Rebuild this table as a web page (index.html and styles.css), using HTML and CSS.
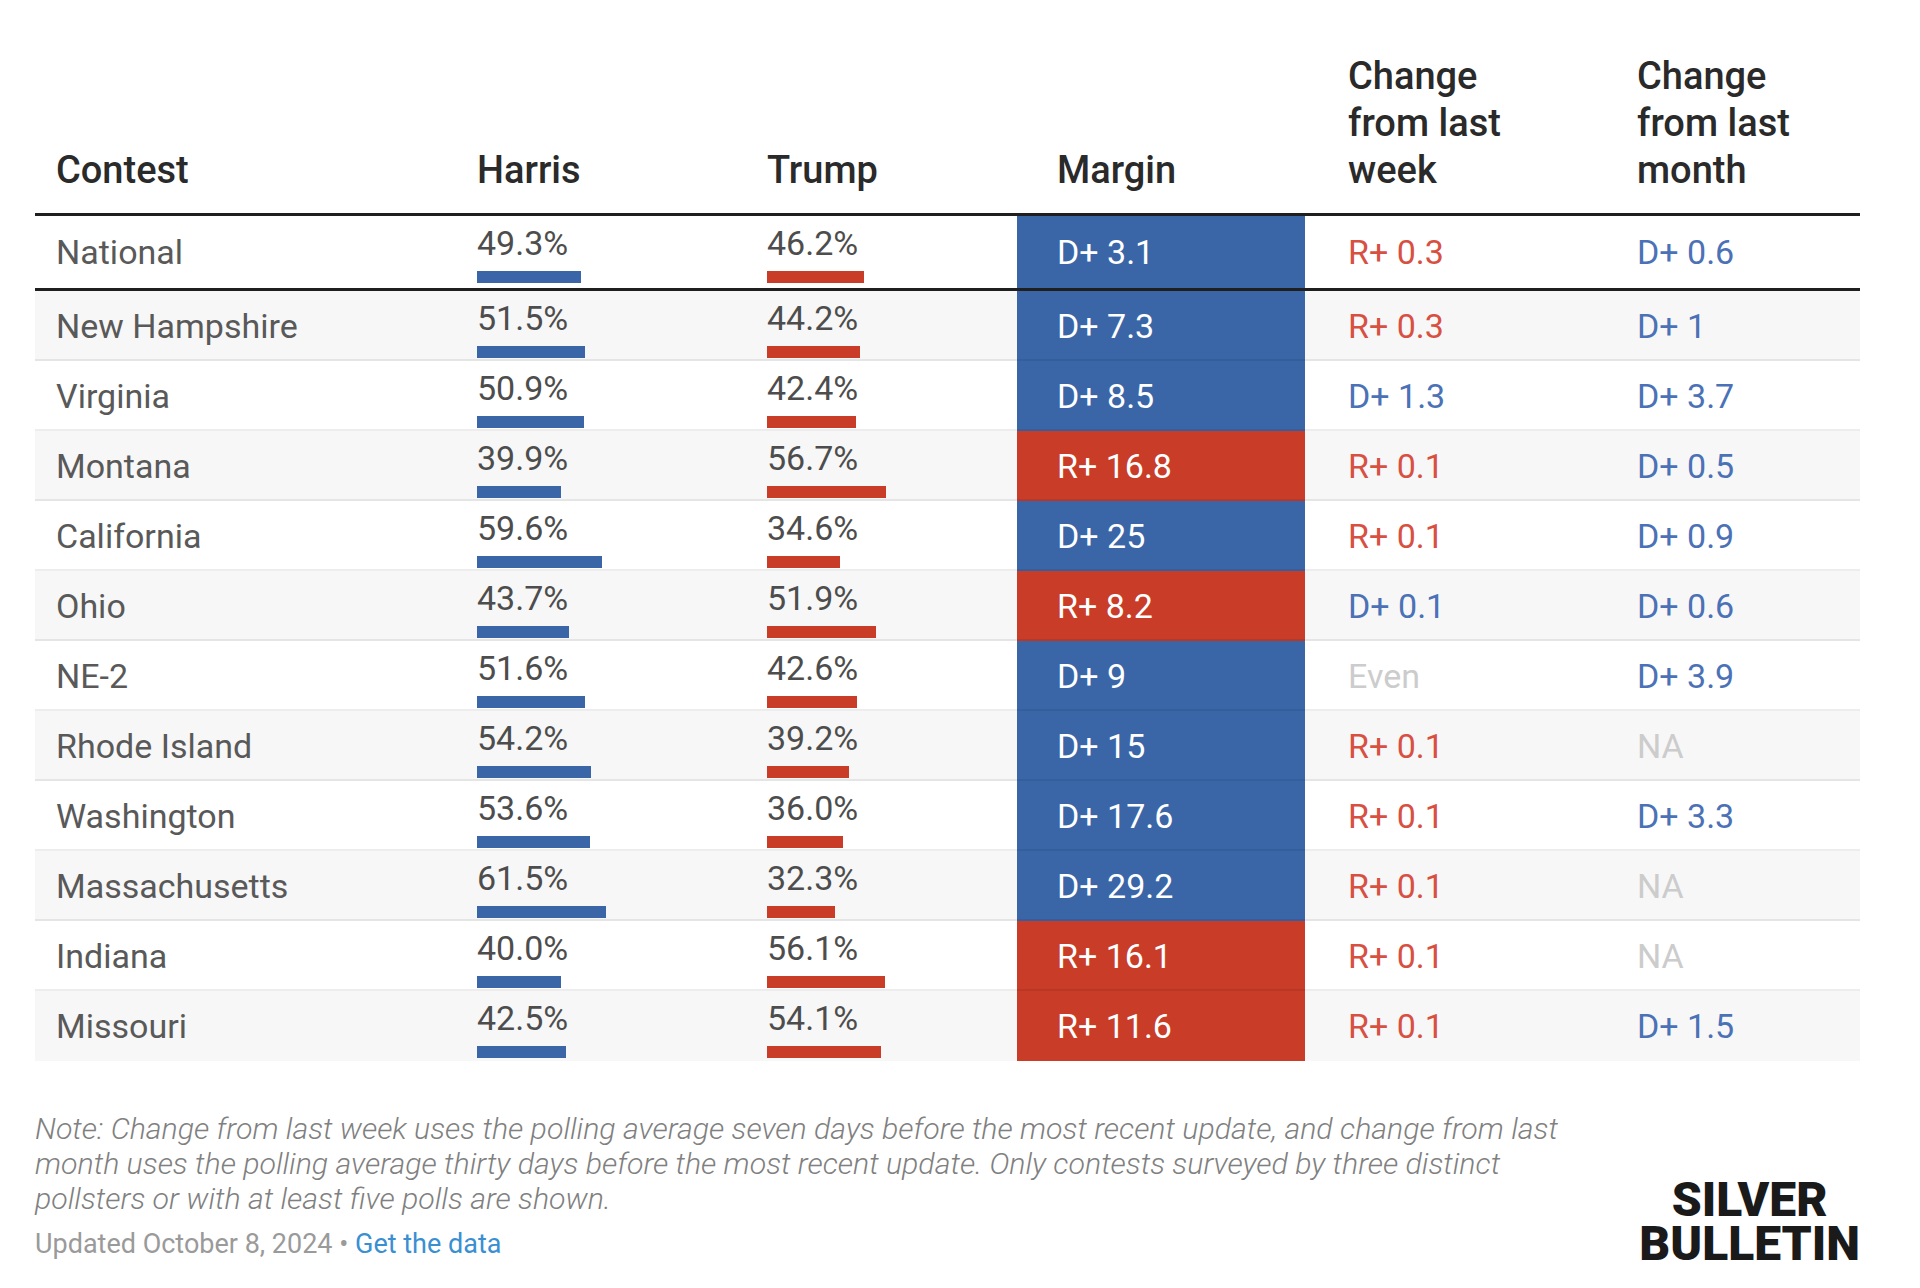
FILE: index.html
```html
<!DOCTYPE html>
<html lang="en">
<head>
<meta charset="utf-8">
<title>Polling averages</title>
<link rel="stylesheet" href="styles.css">
</head>
<body>
<div class="page">
  <div class="table">
    <div class="thead">
      <div class="th c-contest">Contest</div>
      <div class="th c-harris">Harris</div>
      <div class="th c-trump">Trump</div>
      <div class="th c-margin">Margin</div>
      <div class="th c-week">Change<br>from last<br>week</div>
      <div class="th c-month">Change<br>from last<br>month</div>
    </div>

    <div class="row national">
      <div class="td c-contest">National</div>
      <div class="td c-harris"><span class="pct">49.3%</span><span class="bar dem" style="width:103.5px"></span></div>
      <div class="td c-trump"><span class="pct">46.2%</span><span class="bar rep" style="width:97.0px"></span></div>
      <div class="td c-margin m-dem">D+ 3.1</div>
      <div class="td c-week t-rep">R+ 0.3</div>
      <div class="td c-month t-dem">D+ 0.6</div>
    </div>

    <div class="row">
      <div class="td c-contest">New Hampshire</div>
      <div class="td c-harris"><span class="pct">51.5%</span><span class="bar dem" style="width:108.2px"></span></div>
      <div class="td c-trump"><span class="pct">44.2%</span><span class="bar rep" style="width:92.8px"></span></div>
      <div class="td c-margin m-dem">D+ 7.3</div>
      <div class="td c-week t-rep">R+ 0.3</div>
      <div class="td c-month t-dem">D+ 1</div>
    </div>

    <div class="row">
      <div class="td c-contest">Virginia</div>
      <div class="td c-harris"><span class="pct">50.9%</span><span class="bar dem" style="width:106.9px"></span></div>
      <div class="td c-trump"><span class="pct">42.4%</span><span class="bar rep" style="width:89.0px"></span></div>
      <div class="td c-margin m-dem">D+ 8.5</div>
      <div class="td c-week t-dem">D+ 1.3</div>
      <div class="td c-month t-dem">D+ 3.7</div>
    </div>

    <div class="row">
      <div class="td c-contest">Montana</div>
      <div class="td c-harris"><span class="pct">39.9%</span><span class="bar dem" style="width:83.8px"></span></div>
      <div class="td c-trump"><span class="pct">56.7%</span><span class="bar rep" style="width:119.1px"></span></div>
      <div class="td c-margin m-rep">R+ 16.8</div>
      <div class="td c-week t-rep">R+ 0.1</div>
      <div class="td c-month t-dem">D+ 0.5</div>
    </div>

    <div class="row">
      <div class="td c-contest">California</div>
      <div class="td c-harris"><span class="pct">59.6%</span><span class="bar dem" style="width:125.2px"></span></div>
      <div class="td c-trump"><span class="pct">34.6%</span><span class="bar rep" style="width:72.7px"></span></div>
      <div class="td c-margin m-dem">D+ 25</div>
      <div class="td c-week t-rep">R+ 0.1</div>
      <div class="td c-month t-dem">D+ 0.9</div>
    </div>

    <div class="row">
      <div class="td c-contest">Ohio</div>
      <div class="td c-harris"><span class="pct">43.7%</span><span class="bar dem" style="width:91.8px"></span></div>
      <div class="td c-trump"><span class="pct">51.9%</span><span class="bar rep" style="width:109.0px"></span></div>
      <div class="td c-margin m-rep">R+ 8.2</div>
      <div class="td c-week t-dem">D+ 0.1</div>
      <div class="td c-month t-dem">D+ 0.6</div>
    </div>

    <div class="row">
      <div class="td c-contest">NE-2</div>
      <div class="td c-harris"><span class="pct">51.6%</span><span class="bar dem" style="width:108.4px"></span></div>
      <div class="td c-trump"><span class="pct">42.6%</span><span class="bar rep" style="width:89.5px"></span></div>
      <div class="td c-margin m-dem">D+ 9</div>
      <div class="td c-week t-none">Even</div>
      <div class="td c-month t-dem">D+ 3.9</div>
    </div>

    <div class="row">
      <div class="td c-contest">Rhode Island</div>
      <div class="td c-harris"><span class="pct">54.2%</span><span class="bar dem" style="width:113.8px"></span></div>
      <div class="td c-trump"><span class="pct">39.2%</span><span class="bar rep" style="width:82.3px"></span></div>
      <div class="td c-margin m-dem">D+ 15</div>
      <div class="td c-week t-rep">R+ 0.1</div>
      <div class="td c-month t-none">NA</div>
    </div>

    <div class="row">
      <div class="td c-contest">Washington</div>
      <div class="td c-harris"><span class="pct">53.6%</span><span class="bar dem" style="width:112.6px"></span></div>
      <div class="td c-trump"><span class="pct">36.0%</span><span class="bar rep" style="width:75.6px"></span></div>
      <div class="td c-margin m-dem">D+ 17.6</div>
      <div class="td c-week t-rep">R+ 0.1</div>
      <div class="td c-month t-dem">D+ 3.3</div>
    </div>

    <div class="row">
      <div class="td c-contest">Massachusetts</div>
      <div class="td c-harris"><span class="pct">61.5%</span><span class="bar dem" style="width:129.2px"></span></div>
      <div class="td c-trump"><span class="pct">32.3%</span><span class="bar rep" style="width:67.8px"></span></div>
      <div class="td c-margin m-dem">D+ 29.2</div>
      <div class="td c-week t-rep">R+ 0.1</div>
      <div class="td c-month t-none">NA</div>
    </div>

    <div class="row">
      <div class="td c-contest">Indiana</div>
      <div class="td c-harris"><span class="pct">40.0%</span><span class="bar dem" style="width:84.0px"></span></div>
      <div class="td c-trump"><span class="pct">56.1%</span><span class="bar rep" style="width:117.8px"></span></div>
      <div class="td c-margin m-rep">R+ 16.1</div>
      <div class="td c-week t-rep">R+ 0.1</div>
      <div class="td c-month t-none">NA</div>
    </div>

    <div class="row last">
      <div class="td c-contest">Missouri</div>
      <div class="td c-harris"><span class="pct">42.5%</span><span class="bar dem" style="width:89.3px"></span></div>
      <div class="td c-trump"><span class="pct">54.1%</span><span class="bar rep" style="width:113.6px"></span></div>
      <div class="td c-margin m-rep">R+ 11.6</div>
      <div class="td c-week t-rep">R+ 0.1</div>
      <div class="td c-month t-dem">D+ 1.5</div>
    </div>
  </div>

  <div class="footer">
    <div class="notes">
      <p class="note">Note: Change from last week uses the polling average seven days before the most recent update, and change from last<br>month uses the polling average thirty days before the most recent update. Only contests surveyed by three distinct<br>pollsters or with at least five polls are shown.</p>
      <p class="updated">Updated October 8, 2024 • <a class="data-link" href="#">Get the data</a></p>
    </div>
    <div class="logo"><span class="logo-line">SILVER</span><span class="logo-line">BULLETIN</span></div>
  </div>
</div>
</body>
</html>
```

FILE: styles.css
```css
* {
  box-sizing: border-box;
}

html, body {
  margin: 0;
  padding: 0;
  background: #ffffff;
}

body {
  font-family: Roboto, "Liberation Sans", Arial, sans-serif;
  color: #4d4d4d;
}

.page {
  width: 1920px;
  padding: 0 60px 0 35px;
}

.table {
  --cols: 421px 290px 271px 288px 292px 263px;
  width: 1825px;
}

.thead {
  display: grid;
  grid-template-columns: var(--cols);
  align-items: end;
  padding-top: 53px;
  padding-bottom: 19px;
  border-bottom: 3px solid #1f1f1f;
}

.th {
  font-size: 38px;
  line-height: 47px;
  font-weight: 500;
  color: #2a2a2a;
}

.row {
  position: relative;
  display: grid;
  grid-template-columns: var(--cols);
  height: 70px;
  background: #ffffff;
}

.row:nth-child(odd) {
  background: #f7f7f7;
}

.row::after {
  content: "";
  position: absolute;
  left: 0;
  right: 0;
  bottom: 0;
  height: 2px;
  background: rgba(0, 0, 0, 0.07);
}

.row.last::after {
  display: none;
}

.row.national {
  background: #ffffff;
  border-bottom: 3px solid #1f1f1f;
  height: 75px;
}

.row.national::after {
  display: none;
}

.td {
  font-size: 34px;
  line-height: 40px;
  display: flex;
  align-items: center;
}

.c-contest { padding-left: 21px; color: #595959; }
.c-harris, .c-trump { padding-left: 21px; }
.c-margin { padding-left: 40px; }
.c-week { padding-left: 43px; }
.c-month { padding-left: 40px; }

.th.c-contest { color: #2a2a2a; }

.td.c-harris,
.td.c-trump {
  flex-direction: column;
  align-items: flex-start;
  justify-content: flex-start;
  padding-top: 7px;
  color: #4d4d4d;
}

.pct {
  display: block;
  line-height: 40px;
}

.bar {
  display: block;
  height: 12px;
  margin-top: 8px;
}

.bar.dem { background: #3a65a6; }
.bar.rep { background: #c93c28; }

.m-dem {
  background: #3a66a8;
  color: #ffffff;
}

.m-rep {
  background: #c93c28;
  color: #ffffff;
}

.t-rep { color: #d85042; }
.t-dem { color: #4b71b6; }
.t-none { color: #cccccc; }

.footer {
  display: flex;
  justify-content: space-between;
  align-items: flex-end;
  padding-top: 50px;
}

.note {
  margin: 0;
  font-size: 30.3px;
  line-height: 35px;
  font-style: italic;
  font-weight: 300;
  color: #808080;
}

.updated {
  margin: 11px 0 0 0;
  font-size: 27px;
  line-height: 35px;
  color: #9a9a9a;
}

.data-link {
  color: #3a8fd2;
  text-decoration: none;
}

.logo {
  display: flex;
  flex-direction: column;
  align-items: center;
  margin-bottom: -4px;
}

.logo-line {
  display: block;
  font-family: Roboto, "Liberation Sans", sans-serif;
  font-weight: 900;
  font-size: 48px;
  line-height: 44px;
  height: 44px;
  color: #1a1a1a;
}
```
